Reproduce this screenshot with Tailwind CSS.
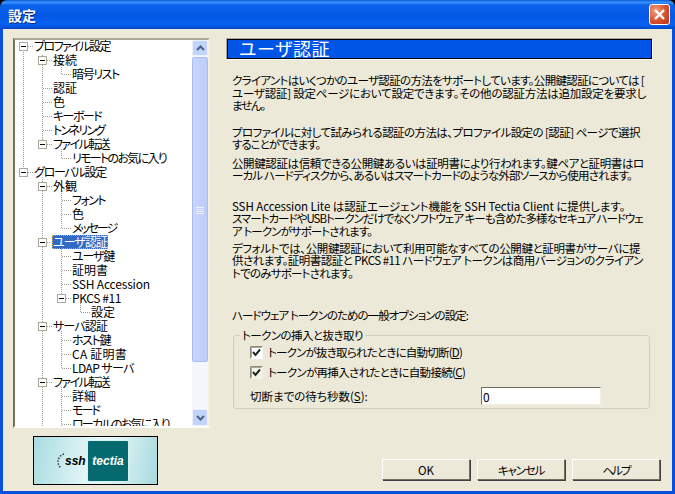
<!DOCTYPE html>
<html lang="ja">
<head>
<meta charset="UTF-8">
<title>設定</title>
<script src="https://cdn.jsdelivr.net/npm/@tailwindcss/browser@4"></script>
</head>
<body class="bg-black overflow-hidden">
<div class="w-[675px] h-[494px] flex flex-col rounded-t-[7px] overflow-hidden font-['Noto_Sans_CJK_JP',sans-serif] text-[12px] leading-[14px] text-black [font-feature-settings:'palt']">
  <!-- title bar -->
  <div class="h-[29px] shrink-0 flex items-center justify-between pl-[8px] pr-[5px] bg-[linear-gradient(180deg,#0a5ad8_0%,#3a93ff_8%,#0c61ec_18%,#0458e6_55%,#0660f0_85%,#0048c8_100%)]">
    <span class="text-white font-bold text-[14px] [text-shadow:1px_1px_0_#0a2a80]">設定</span>
    <div class="w-[21px] h-[21px] rounded-[3px] border border-white bg-[radial-gradient(circle_at_30%_30%,#f0a080,#d8512e_55%,#b83010)] flex items-center justify-center">
      <svg width="13" height="13" viewBox="0 0 13 13"><path d="M2 2 L11 11 M11 2 L2 11" stroke="#fff" stroke-width="2.4"/></svg>
    </div>
  </div>
  <!-- dialog body -->
  <div class="flex-1 flex border-x-[3px] border-b-[3px] border-[#0a50dc] bg-[#ece9d8]">
    <!-- left column -->
    <div class="w-[209px] shrink-0 pl-[10px] pt-[9px] flex flex-col">
      <div class="relative w-[197px] h-[390px] bg-white border-2 border-t-[#aca899] border-l-[#716f64] border-r-[#f1efe2] border-b-[#fff] overflow-hidden flex">
        <svg class="absolute top-0 left-0" width="177" height="386" viewBox="15 40 177 386" fill="none">
          <g stroke="#9c9c94" stroke-dasharray="1 1">
            <path d="M23.5 50V168M42.5 55V140M42.5 177V426M61.5 65V74M61.5 149V158M61.5 191V228M61.5 247V294M61.5 331V368M61.5 387V426M80.5 303V312"/>
            <path d="M28 46.5H33M47 60.5H52M62 74.5H71M43 88.5H52M43 102.5H52M43 116.5H52M43 130.5H52M47 144.5H52M62 158.5H71M28 172.5H33M47 186.5H52M62 200.5H71M62 214.5H71M62 228.5H71M47 242.5H51M62 256.5H71M62 270.5H71M62 284.5H71M66 298.5H71M81 312.5H90M47 326.5H52M62 340.5H71M62 354.5H71M62 368.5H71M47 382.5H52M62 396.5H71M62 410.5H71M62 424.5H71"/>
          </g>
          <g fill="#fff" stroke="#aca899">
            <rect x="19.5" y="42.5" width="8" height="8"/><rect x="38.5" y="56.5" width="8" height="8"/><rect x="38.5" y="140.5" width="8" height="8"/><rect x="19.5" y="168.5" width="8" height="8"/><rect x="38.5" y="182.5" width="8" height="8"/><rect x="38.5" y="238.5" width="8" height="8"/><rect x="57.5" y="294.5" width="8" height="8"/><rect x="38.5" y="322.5" width="8" height="8"/><rect x="38.5" y="378.5" width="8" height="8"/>
          </g>
          <path stroke="#000" d="M21 46.5H26M40 60.5H45M40 144.5H45M21 172.5H26M40 186.5H45M40 242.5H45M59 298.5H64M40 326.5H45M40 382.5H45"/>
        </svg>
        <div class="relative flex-1 mt-[-1px] whitespace-nowrap">
          <div class="h-[14px] pl-[19px] tracking-[-1.54px]">プロファイル設定</div>
          <div class="h-[14px] pl-[38px]">接続</div>
          <div class="h-[14px] pl-[57px] tracking-[-1.37px]">暗号リスト</div>
          <div class="h-[14px] pl-[38px]">認証</div>
          <div class="h-[14px] pl-[38px]">色</div>
          <div class="h-[14px] pl-[38px] tracking-[-1.59px]">キーボード</div>
          <div class="h-[14px] pl-[38px] tracking-[-1.92px]">トンネリング</div>
          <div class="h-[14px] pl-[38px] tracking-[-1.59px]">ファイル転送</div>
          <div class="h-[14px] pl-[57px] tracking-[-1.69px]">リモートのお気に入り</div>
          <div class="h-[14px] pl-[19px] tracking-[-1.27px]">グローバル設定</div>
          <div class="h-[14px] pl-[38px]">外観</div>
          <div class="h-[14px] pl-[57px] tracking-[-1.57px]">フォント</div>
          <div class="h-[14px] pl-[57px]">色</div>
          <div class="h-[14px] pl-[57px] tracking-[-2.14px]">メッセージ</div>
          <div class="h-[14px] pl-[37px]"><span class="inline-block h-[14px] px-[1px] tracking-[-0.96px] bg-[#316ac5] text-white outline-1 outline-dotted outline-[#e0a040] -outline-offset-1">ユーザ認証</span></div>
          <div class="h-[14px] pl-[57px] tracking-[-1.2px]">ユーザ鍵</div>
          <div class="h-[14px] pl-[57px]">証明書</div>
          <div class="h-[14px] pl-[57px] tracking-[-0.18px]">SSH Accession</div>
          <div class="h-[14px] pl-[57px] tracking-[-0.41px]">PKCS #11</div>
          <div class="h-[14px] pl-[76px]">設定</div>
          <div class="h-[14px] pl-[38px] tracking-[-0.87px]">サーバ認証</div>
          <div class="h-[14px] pl-[57px] tracking-[-1.42px]">ホスト鍵</div>
          <div class="h-[14px] pl-[57px] tracking-[0.23px]">CA 証明書</div>
          <div class="h-[14px] pl-[57px] tracking-[-0.57px]">LDAP サーバ</div>
          <div class="h-[14px] pl-[38px] tracking-[-1.59px]">ファイル転送</div>
          <div class="h-[14px] pl-[57px]">詳細</div>
          <div class="h-[14px] pl-[57px] tracking-[-1.91px]">モード</div>
          <div class="h-[14px] pl-[57px] tracking-[-1.75px]">ローカルのお気に入り</div>
        </div>
        <!-- scrollbar -->
        <div class="relative w-[16px] shrink-0 bg-[#f5f7fd] flex flex-col">
          <div class="h-[16px] shrink-0 rounded-[2px] border border-[#eef2fd] bg-[#c2d3fc] flex items-center justify-center">
            <svg width="9" height="6" viewBox="0 0 9 6"><path d="M1 5L4.5 1.5L8 5" fill="none" stroke="#4d6185" stroke-width="2"/></svg>
          </div>
          <div class="h-[305px] mt-[1px] shrink-0 rounded-[2px] border border-[#a8bdf0] bg-[linear-gradient(90deg,#c9d6fc,#bccbfb)] flex items-center justify-center">
            <svg width="8" height="8" viewBox="0 0 8 8"><path d="M0 1.5H8M0 3.5H8M0 5.5H8M0 7.5H8" stroke="#eef3ff"/></svg>
          </div>
          <div class="flex-1"></div>
          <div class="h-[17px] shrink-0 rounded-[2px] border border-[#eef2fd] bg-[#c2d3fc] flex items-center justify-center">
            <svg width="9" height="6" viewBox="0 0 9 6"><path d="M1 1L4.5 4.5L8 1" fill="none" stroke="#4d6185" stroke-width="2"/></svg>
          </div>
        </div>
      </div>
      <!-- logo -->
      <div class="mt-[8px] ml-[20px] w-[125px] h-[49px] border border-black bg-[linear-gradient(100deg,#a8dde0,#e4f5f7_45%,#e8f7f8_60%,#a6dade)] flex items-center pl-[20px] overflow-hidden">
        <svg width="11" height="18" viewBox="0 0 11 18" class="shrink-0"><path d="M10 2A8 8 0 0 0 7 16" fill="none" stroke="#333" stroke-width="1.5" stroke-dasharray="1.5 1.5"/></svg>
        <span class="w-[21px] font-['Liberation_Sans',sans-serif] font-bold italic text-[12px] text-black">ssh</span>
        <div class="ml-[1px] w-[42px] h-[42px] shrink-0 rounded-[2px] bg-[#056a6f] border border-[#d8f0f0] flex items-center justify-center font-['Liberation_Sans',sans-serif] font-bold italic text-[12px] text-white">tectia</div>
      </div>
    </div>
    <!-- right column -->
    <div class="w-[427px] shrink-0 ml-[14px] pt-[9px] flex flex-col">
      <div class="h-[22px] border border-t-[#aca899] border-l-[#aca899] border-r-white border-b-white">
        <div class="h-[20px] bg-[#0054e6] border border-black pl-[11px] text-white text-[18px] leading-[17px] tracking-[0.6px]">ユーザ認証</div>
      </div>
      <div class="pl-[6px] w-[427px] whitespace-nowrap text-[11.5px] leading-[12.5px]">
        <p class="mt-[14px]"><span class="block tracking-[-0.67px]">クライアントはいくつかのユーザ認証の方法をサポートしています。公開鍵認証については [</span><span class="block tracking-[-0.23px]">ユーザ認証] 設定ページにおいて設定できます。その他の認証方法は追加設定を要求し</span><span class="block tracking-[-1.21px]">ません。</span></p>
        <p class="mt-[14.25px]"><span class="block tracking-[-0.57px]">プロファイルに対して試みられる認証の方法は、プロファイル設定の [認証] ページで選択</span><span class="block tracking-[-1.03px]">することができます。</span></p>
        <p class="mt-[6px]"><span class="block tracking-[-0.38px]">公開鍵認証は信頼できる公開鍵あるいは証明書により行われます。鍵ペアと証明書はロ</span><span class="block tracking-[-0.83px]">ーカル ハードディスクから、あるいはスマートカードのような外部ソースから使用されます。</span></p>
        <p class="mt-[18px]"><span class="block tracking-[-0.07px]">SSH Accession Lite は認証エージェント機能を SSH Tectia Client に提供します。</span><span class="block tracking-[-0.99px]">スマートカードやUSBトークンだけでなくソフトウェア キーも含めた多様なセキュア ハードウェ</span><span class="block tracking-[-0.92px]">ア トークンがサポートされます。</span></p>
        <p class="mt-[4.5px]"><span class="block tracking-[-0.39px]">デフォルトでは、公開鍵認証において利用可能なすべての公開鍵と証明書がサーバに提</span><span class="block tracking-[-0.52px]">供されます。証明書認証と PKCS #11 ハードウェア トークンは商用バージョンのクライアン</span><span class="block tracking-[-0.79px]">トでのみサポートされます。</span></p>
        <p class="mt-[29.5px] tracking-[-0.95px]">ハードウェア トークンのための一般オプションの設定:</p>
      </div>
      <fieldset class="ml-[7px] mt-[7.25px] w-[417px] h-[80px] border border-[#d0d0bf] rounded-[3px] pl-[16px] pr-[10px]">
        <legend class="ml-[-10px] px-[2px] text-[11.5px] leading-[13px] tracking-[-0.55px]">トークンの挿入と抜き取り</legend>
        <label class="flex items-center h-[14px] mt-[3.5px] gap-[5px]">
          <svg width="13" height="13" viewBox="0 0 13 13" class="shrink-0"><rect width="13" height="13" fill="#fff"/><path d="M.5 12.5V.5H12.5" fill="none" stroke="#8a8878"/><path d="M1.5 11.5V1.5H11.5" fill="none" stroke="#aca899"/><path d="M3 6L5.5 9L10 3.5" fill="none" stroke="#1c2a1c" stroke-width="2"/></svg>
          <span class="text-[11.5px] tracking-[-0.78px]">トークンが抜き取られたときに自動切断(<u>D</u>)</span>
        </label>
        <label class="flex items-center h-[14px] mt-[6px] gap-[5px]">
          <svg width="13" height="13" viewBox="0 0 13 13" class="shrink-0"><rect width="13" height="13" fill="#f4f3ea"/><path d="M.5 12.5V.5H12.5" fill="none" stroke="#8a8878"/><path d="M1.5 11.5V1.5H11.5" fill="none" stroke="#aca899"/><path d="M3 6L5.5 9L10 3.5" fill="none" stroke="#1c2a1c" stroke-width="2"/></svg>
          <span class="text-[11.5px] tracking-[-0.69px]">トークンが再挿入されたときに自動接続(<u>C</u>)</span>
        </label>
        <div class="flex items-center mt-[8px] h-[18px]">
          <span class="w-[231px] text-[11.5px]">切断までの待ち秒数(<u>S</u>):</span>
          <input value="0" class="w-[120px] h-[18px] bg-white border border-t-[#716f64] border-l-[#716f64] border-r-[#f1efe2] border-b-[#f1efe2] px-[1px] text-[12px] outline-none">
        </div>
      </fieldset>
      <div class="mt-auto mb-[11px] flex justify-end gap-[7px] mr-[-7px] text-[11.5px]">
        <button class="w-[88px] h-[21px] bg-[#ece9d8] border border-t-white border-l-white border-r-[#716f64] border-b-[#716f64] shadow-[1px_1px_0_#404040]">OK</button>
        <button class="w-[88px] h-[21px] bg-[#ece9d8] border border-t-white border-l-white border-r-[#716f64] border-b-[#716f64] shadow-[1px_1px_0_#404040] tracking-[-1.22px]">キャンセル</button>
        <button class="w-[88px] h-[21px] bg-[#ece9d8] border border-t-white border-l-white border-r-[#716f64] border-b-[#716f64] shadow-[1px_1px_0_#404040] tracking-[-2px]">ヘルプ</button>
      </div>
    </div>
  </div>
</div>
</body>
</html>
